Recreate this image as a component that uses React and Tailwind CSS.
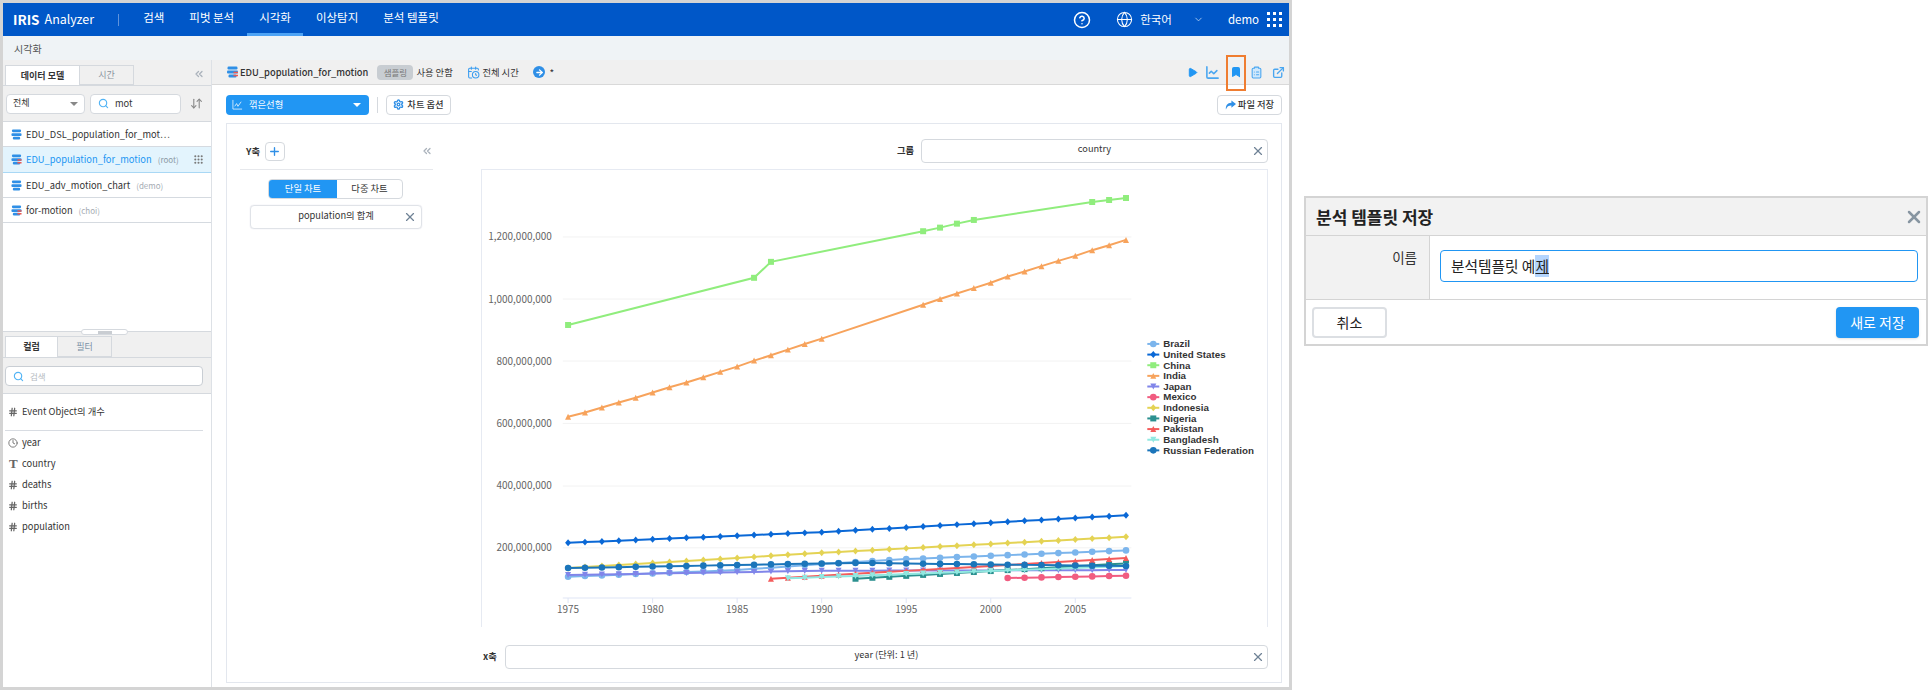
import { Search, Settings, ChevronsLeft, ChevronDown, X, Plus, Globe, CircleHelp, Play, ChartLine, Bookmark, ClipboardList, ExternalLink, Clock, Hash, CalendarClock, ArrowRight, ArrowDownUp, Grip } from 'lucide-react'

const font = "font-['Noto_Sans_CJK_KR','Noto_Sans',sans-serif]"

const X0 = 567.3
const YEAR = 16.95
const xOf = (yr) => X0 + (yr - 1975) * YEAR

// interpolate between [year, y] keys for the years listed
function line(keys, start = 1975, end = 2008) {
  const pts = []
  for (let yr = start; yr <= end; yr++) {
    let i = 0
    while (i < keys.length - 2 && keys[i + 1][0] < yr) i++
    const [a, ya] = keys[i]
    const [b, yb] = keys[i + 1]
    pts.push([yr, ya + ((yr - a) / (b - a)) * (yb - ya)])
  }
  return pts
}

const china = [[1975, 324.3], [1986, 277], [1987, 261], [1996, 230.3], [1997, 226.7], [1998, 222.7], [1999, 219], [2006, 201], [2007, 199], [2008, 197]]
const indiaA = [416.3, 412, 407, 402, 397.3, 392, 386.7, 382, 376.7, 371.3, 366, 360, 354.7, 349, 343.3, 338].map((y, i) => [1975 + i, y])
const indiaB = [304, 298.3, 292.7, 287.3, 282, 275.7, 270.7, 265.3, 260, 255, 249.3, 244.3, 239].map((y, i) => [1996 + i, y])

const series = [
  { name: 'Brazil', color: '#7cb5ec', mark: 'circle', pts: line([[1975, 576.7], [1985, 570], [1990, 564], [1995, 559], [2000, 555.7], [2008, 550.3]]) },
  { name: 'United States', color: '#0a68d6', mark: 'diamond', pts: line([[1975, 542.7], [1990, 532], [2008, 515]]) },
  { name: 'China', color: '#90ed7d', mark: 'square', pts: china },
  { name: 'India', color: '#f7a35c', mark: 'triangle', pts: [...indiaA, ...indiaB] },
  { name: 'Japan', color: '#8085e9', mark: 'down', pts: line([[1975, 575], [1990, 570.7], [2008, 570]]) },
  { name: 'Mexico', color: '#f15c80', mark: 'circle', pts: line([[2001, 578], [2008, 575.7]], 2001) },
  { name: 'Indonesia', color: '#e4d354', mark: 'diamond', pts: line([[1975, 568], [1990, 552.7], [2008, 536.7]]) },
  { name: 'Nigeria', color: '#2b908f', mark: 'square', pts: line([[1992, 578.7], [2008, 563.3]], 1992) },
  { name: 'Pakistan', color: '#f45b5b', mark: 'triangle', pts: line([[1987, 578.7], [2008, 558]], 1987) },
  { name: 'Bangladesh', color: '#91e8e1', mark: 'down', pts: line([[1988, 578.3], [2008, 566]], 1988) },
  { name: 'Russian Federation', color: '#1b75ba', mark: 'circle', pts: line([[1975, 568], [1992, 562.8], [2008, 566]]) },
]

function Marker({ type, x, y, color, r = 3 }) {
  if (type === 'circle') return <circle cx={x} cy={y} r={r + 0.3} fill={color} />
  if (type === 'square') return <rect x={x - r} y={y - r} width={r * 2} height={r * 2} fill={color} />
  if (type === 'diamond') return <path d={`M${x} ${y - r - 0.5}L${x + r} ${y}L${x} ${y + r + 0.5}L${x - r} ${y}Z`} fill={color} />
  if (type === 'triangle') return <path d={`M${x} ${y - r}L${x + r} ${y + r}L${x - r} ${y + r}Z`} fill={color} />
  return <path d={`M${x - r} ${y - r}L${x + r} ${y - r}L${x} ${y + r}Z`} fill={color} />
}

function Chart() {
  const labels = [[1200, 236], [1000, 298.3], [800, 360.5], [600, 423], [400, 485.7], [200, 547.7]]
  return (
    <svg viewBox="481 169 787 458" className="block w-[787px] h-[458px] border-l border-t border-r border-[#e6eaf2] box-border">
      {labels.map(([v, y]) => (
        <g key={v}>
          <line x1="562" x2="1132" y1={y} y2={y} stroke="#f2f2f2" strokeWidth="1" />
          <text x="551" y={y + 3.5} textAnchor="end" fontSize="10" fill="#666">{v === 1000 ? '1,000,000,000' : v === 1200 ? '1,200,000,000' : `${v},000,000`}</text>
        </g>
      ))}
      <line x1="562" x2="1132" y1="598" y2="598" stroke="#dfe5f5" strokeWidth="1" />
      {[1975, 1980, 1985, 1990, 1995, 2000, 2005].map((yr) => (
        <g key={yr}>
          <line x1={xOf(yr)} x2={xOf(yr)} y1="598" y2="603" stroke="#dfe5f5" />
          <text x={xOf(yr)} y="613" textAnchor="middle" fontSize="10" fill="#666">{yr}</text>
        </g>
      ))}
      {series.map((s) => (
        <g key={s.name}>
          <polyline fill="none" stroke={s.color} strokeWidth="2" points={s.pts.map(([yr, y]) => `${xOf(yr)},${y}`).join(' ')} />
          {s.pts.map(([yr, y]) => <Marker key={yr} type={s.mark} x={xOf(yr)} y={y} color={s.color} />)}
        </g>
      ))}
      {series.map((s, i) => {
        const y = 343.3 + i * 10.67
        return (
          <g key={s.name}>
            <line x1="1148" x2="1160" y1={y} y2={y} stroke={s.color} strokeWidth="2" />
            <Marker type={s.mark} x={1154} y={y} color={s.color} />
            <text x="1164" y={y + 3.3} fontSize="9.8" fontWeight="700" fill="#333" fontFamily="'Liberation Sans', sans-serif">{s.name}</text>
          </g>
        )
      })}
    </svg>
  )
}

function DbIcon({ red = false, className = 'w-[11px] h-[11px]' }) {
  return (
    <svg viewBox="0 0 12 12" className={`shrink-0 ${className}`}>
      <rect x="1" y="0.5" width="10" height="3" rx="1.2" fill="#2f8fe6" />
      <rect x="0.5" y="4.5" width="11" height="3" rx="1" fill="#2f8fe6" />
      <rect x="2" y="8.5" width="8" height="3" rx="1.2" fill="#2f8fe6" />
      {red && <path d="M7 6.5h4.5M7 9.5h4.5" stroke="#ee5a52" strokeWidth="1.6" />}
    </svg>
  )
}

function ModelRow({ name, owner, active, red }) {
  return (
    <div className={`flex items-center pl-[8px] pr-[6px] border-b text-[9.3px] shrink-0 ${active ? 'h-[26px] bg-[#e3f4fd] border-[#a9d8f5] text-[#2196f3]' : 'h-[25px] border-[#d5dae0] text-[#333]'}`}>
      <DbIcon red={red} />
      <span className="ml-[4px] whitespace-nowrap mt-[1px]">{name}</span>
      {owner && <span className={`ml-[6px] mt-[1px] text-[8px] ${active ? 'text-[#8b9aa6]' : 'text-[#a5acb3]'}`}>{owner}</span>}
      {active && <Grip size={11} className="ml-auto mr-[1px] text-[#777]" strokeWidth={2.5} />}
    </div>
  )
}

function ColumnRow({ icon, children, h = 'h-[21px]' }) {
  return (
    <div className={`flex items-center ${h} text-[9.3px] text-[#333]`}>
      <span className="w-[19px] pl-[5px] text-[#666] flex">{icon}</span>
      {children}
    </div>
  )
}

const hash = <Hash size={10} strokeWidth={3} />

function Sidebar() {
  return (
    <aside className="w-[209px] shrink-0 border-r border-[#dde1e6] flex flex-col">
      <div className="h-[271px] flex flex-col shrink-0">
        <div className="h-[25px] bg-[#f0f0f0] flex items-end pl-[2px] pr-[6px] shrink-0">
          <div className="w-[75px] h-[20px] bg-white border border-b-0 border-[#d5d9de] flex items-center justify-center text-[9px] font-bold text-[#333]">데이터 모델</div>
          <div className="w-[54px] h-[20px] border border-l-0 border-[#d5d9de] flex items-center justify-center text-[9px] text-[#8a949e]">시간</div>
          <ChevronsLeft size={12} strokeWidth={2.5} className="ml-auto mb-[5px] text-[#aab2bb]" />
        </div>
        <div className="h-[37px] bg-[#f0f0f0] border-t border-[#d5d9de] border-b flex items-center pl-[3px] gap-[5px] shrink-0">
          <div className="w-[79px] h-[20px] bg-white border border-[#d5d9de] rounded-sm flex items-center px-[6px] pb-[2px] text-[9px] text-[#333]">
            전체
            <span className="ml-auto mt-[2px] w-0 h-0 border-x-[4px] border-x-transparent border-t-[4px] border-t-[#888]" />
          </div>
          <div className="w-[91px] h-[20px] bg-white border border-[#d5d9de] rounded-sm flex items-center px-[7px] text-[9.3px] text-[#333]">
            <Search size={11} strokeWidth={2.5} className="text-[#53b4f5] mr-[6px]" />
            mot
          </div>
          <ArrowDownUp size={13} className="ml-[4px] text-[#888]" />
        </div>
        <ModelRow name="EDU_DSL_population_for_mot⋯" />
        <ModelRow name="EDU_population_for_motion" owner="(root)" active red />
        <ModelRow name="EDU_adv_motion_chart" owner="(demo)" />
        <ModelRow name="for-motion" owner="(choi)" red />
      </div>
      <div className="relative h-[27px] bg-[#f0f0f0] border-t border-[#d5d9de] border-b flex items-end pl-[2px] shrink-0">
        <div className="absolute left-[78px] -top-[3px] w-[47px] h-[6px] bg-white border border-[#d5d9de] rounded-full flex items-center justify-center">
          <span className="w-[14px] h-[3px] bg-[#c9cdd2]" />
        </div>
        <div className="w-[53px] h-[21px] bg-white border border-b-0 border-[#d5d9de] flex items-center justify-center text-[9px] font-bold text-[#333]">컬럼</div>
        <div className="w-[54px] h-[21px] border border-l-0 border-[#d5d9de] flex items-center justify-center text-[9px] text-[#7b93a8]">필터</div>
      </div>
      <div className="h-[36px] bg-[#f0f0f0] border-b border-[#d5d9de] flex items-start pt-[8px] pl-[2px] shrink-0">
        <div className="w-[198px] h-[20px] bg-white border border-[#c9ced4] rounded-sm flex items-center px-[7px] text-[8.5px] text-[#b5bbc1]">
          <Search size={11} strokeWidth={2.5} className="text-[#53b4f5] mr-[6px]" />
          검색
        </div>
      </div>
      <div className="pt-[6px]">
        <ColumnRow icon={hash} h="h-[24px]">Event Object의 개수</ColumnRow>
        <div className="h-px bg-[#d8dce2] mx-[2px] mt-[6px] mb-[1px] w-[198px]" />
        <ColumnRow icon={<Clock size={10} strokeWidth={2} />}>year</ColumnRow>
        <ColumnRow icon={<span className="font-['Liberation_Serif',serif] font-bold text-[13px] leading-none pl-[1px]">T</span>}>country</ColumnRow>
        <ColumnRow icon={hash}>deaths</ColumnRow>
        <ColumnRow icon={hash}>births</ColumnRow>
        <ColumnRow icon={hash}>population</ColumnRow>
      </div>
    </aside>
  )
}

function Toolbar() {
  return (
    <div className="h-[25px] bg-[#f0f0f0] border-b border-[#d9d9d9] flex items-center pl-[14px] pr-[4px] text-[9.3px] text-[#333]">
      <DbIcon className="w-[13px] h-[12px]" red />
      <span className="ml-[1px] mt-[1px] font-medium">EDU_population_for_motion</span>
      <span className="ml-[9px] w-[36px] h-[15px] bg-[#c8cdd2] rounded-sm flex items-center justify-center text-[8.5px] text-[#777]">샘플링</span>
      <span className="ml-[3px] mt-[1px] w-[36px] whitespace-nowrap">사용 안함</span>
      <CalendarClock size={13} className="ml-[15px] text-[#3b9df0]" />
      <span className="ml-[2px] mt-[1px] w-[36px] whitespace-nowrap">전체 시간</span>
      <span className="ml-[15px] w-[12px] h-[12px] bg-[#2f8fe6] rounded-full flex items-center justify-center">
        <ArrowRight size={9} strokeWidth={3.5} className="text-white" />
      </span>
      <span className="ml-[4px] text-[10px]">*</span>
      <div className="ml-auto flex items-center relative text-[#4aa6f0]">
        <Play size={11} fill="#2196f3" className="text-[#2196f3]" />
        <ChartLine size={15} strokeWidth={2.5} className="ml-[7px]" />
        <Bookmark size={12} fill="#2196f3" className="ml-[10px] text-[#2196f3]" />
        <ClipboardList size={13} fill="#cfe8fc" className="ml-[8px]" />
        <ExternalLink size={13} strokeWidth={2.5} className="ml-[9px]" />
        <span className="absolute left-[39px] -top-[10px] w-[20px] h-[36px] border-2 border-[#ef7d31]" />
      </div>
    </div>
  )
}

function ActionRow() {
  return (
    <div className="h-[38px] flex items-center pl-[14px] pr-[7px] pt-[1px] text-[9.3px]">
      <div className="w-[143px] h-[20px] bg-[#2196f3] rounded-sm flex items-center px-[6px] text-white">
        <svg viewBox="0 0 12 12" className="w-[11px] h-[11px] mr-[6px]" fill="none" stroke="#fff" strokeWidth="0.8"><path d="M1 1v10h10M3 8l2-3 1.5 3L10 3" /></svg>
        꺾은선형
        <span className="ml-auto mr-[2px] w-0 h-0 border-x-[4px] border-x-transparent border-t-[4px] border-t-white" />
      </div>
      <span className="ml-[8px] w-px h-[16px] bg-[#d5d9de]" />
      <div className="ml-[8px] w-[65px] h-[20px] border border-[#d5d9de] rounded-sm flex items-center justify-center text-[#333] font-medium">
        <Settings size={11} strokeWidth={3} className="text-[#2f8fe6] mr-[3px]" />
        차트 옵션
      </div>
      <div className="ml-auto w-[65px] h-[20px] border border-[#d5d9de] rounded-sm flex items-center justify-center text-[#333] font-medium">
        <svg viewBox="0 0 12 10" className="w-[11px] h-[10px] mr-[2px]"><path d="M7 0l5 4-5 4V5.5C4 5.5 2 6.5 1 10c-.5-4 1.5-7.5 6-7.5z" fill="#2f8fe6" /></svg>
        파일 저장
      </div>
    </div>
  )
}

function YAxisPanel() {
  return (
    <div className="w-[254px] shrink-0 pl-[13px] pt-[18px]">
      <div className="w-[193px] h-[28px] border-b border-[#e6e8ec] flex items-start pl-[6px]">
        <span className="text-[9.3px] font-bold text-[#333] mt-[3px]">Y축</span>
        <span className="ml-[5px] w-[20px] h-[19px] border border-[#d5d9de] rounded-sm flex items-center justify-center">
          <Plus size={13} strokeWidth={2.5} className="text-[#2f8fe6]" />
        </span>
        <ChevronsLeft size={12} strokeWidth={2.5} className="ml-auto mt-[3px] text-[#aab2bb]" />
      </div>
      <div className="mt-[9px] ml-[28px] w-[135px] h-[20px] flex text-[9.3px] rounded-sm overflow-hidden border border-[#d5d9de]">
        <div className="w-[68px] bg-[#2196f3] text-white flex items-center justify-center">단일 차트</div>
        <div className="flex-1 text-[#333] flex items-center justify-center">다중 차트</div>
      </div>
      <div className="mt-[6px] ml-[10px] w-[172px] h-[24px] border border-[#e0e3e8] rounded-sm flex items-center justify-center relative pb-[2px] text-[9.3px] text-[#333] shadow-[0_0_1px_#ccd]">
        population의 합계
        <X size={14} className="absolute right-[4px] top-[4px] text-[#6f8296]" />
      </div>
    </div>
  )
}

function ValueBox({ label, children }) {
  return (
    <div className="flex items-center">
      {label}
      <div className="h-[24px] border border-[#d5d9de] rounded-sm flex-1 flex items-center justify-center relative pb-[4px] text-[9.2px] text-[#333]">
        {children}
        <X size={14} className="absolute right-[2px] top-[4px] text-[#6f8296]" />
      </div>
    </div>
  )
}

function Card() {
  return (
    <div className="ml-[14px] mr-[7px] h-[560px] border border-[#e3e7ee] flex">
      <YAxisPanel />
      <div className="w-[787px] pt-[15px]">
        <ValueBox label={<span className="w-[440px] pr-[7px] text-right text-[9.3px] font-bold text-[#333]">그룹</span>}>country</ValueBox>
        <div className="mt-[6px]"><Chart /></div>
        <div className="mt-[18px]">
          <ValueBox label={<span className="w-[24px] pl-[2px] text-[9.3px] font-bold text-[#333]">x축</span>}>year (단위: 1 년)</ValueBox>
        </div>
      </div>
    </div>
  )
}

function TemplateModal() {
  return (
    <div className="mt-[196px] ml-[12px] w-[624px] h-[150px] border-2 border-[#d4d4d4] flex flex-col">
      <div className="h-[38px] bg-[#f2f2f2] border-b border-[#d4d4d4] flex items-center pl-[10px] pr-[2px]">
        <span className="text-[17px] font-bold text-[#222]">분석 템플릿 저장</span>
        <X size={20} strokeWidth={3} className="ml-auto text-[#8795a1]" />
      </div>
      <div className="h-[64px] border-b border-[#d4d4d4] flex">
        <div className="w-[124px] bg-[#f2f2f2] border-r border-[#d4d4d4] text-right pr-[12px] pt-[11px] text-[13.5px] text-[#333]">이름</div>
        <div className="flex-1 pl-[10px] pr-[8px] pt-[14px]">
          <div className="h-[32px] border border-[#2196f3] rounded-[4px] flex items-center pl-[10px] text-[14.7px] text-[#222]">
            분석템플릿 예<span className="bg-[#b4d5fe] underline">제</span>
          </div>
        </div>
      </div>
      <div className="flex-1 flex items-center justify-between pl-[6px] pr-[7px]">
        <button className="w-[75px] h-[31px] border-2 border-[#dcdfe3] rounded-[4px] text-[14px] text-[#222]">취소</button>
        <button className="w-[83px] h-[31px] bg-[#2196f3] rounded-[4px] text-[14px] text-white shadow-sm">새로 저장</button>
      </div>
    </div>
  )
}

export default function App() {
  const nav = ['검색', '피벗 분석', '시각화', '이상탐지', '분석 템플릿']
  return (
    <div className={`w-[1929px] h-[691px] bg-white flex items-start overflow-hidden ${font}`}>
      <div className="w-[1292px] h-[690px] border-[3px] border-[#d4d4d4] flex flex-col shrink-0 box-border">
        <header className="h-[33px] bg-[#0057c8] flex items-center text-white shrink-0">
          <span className="ml-[10px] text-[13.5px] font-bold">IRIS</span>
          <span className="ml-[5px] text-[12.5px]">Analyzer</span>
          <span className="ml-[24px] w-px h-[12px] bg-[#5f93dc]" />
          <nav className="ml-[12px] flex h-full">
            {nav.map((n) => (
              <div key={n} className={`px-[12px] mr-[1px] flex items-center text-[11.5px] border-b-[3px] ${n === '시각화' ? 'border-[#4da3f5]' : 'border-transparent'}`}>{n}</div>
            ))}
          </nav>
          <div className="ml-auto flex items-center pr-[7px]">
            <CircleHelp size={18} />
            <Globe size={17} className="ml-[25px]" strokeWidth={1.5} />
            <span className="ml-[7px] text-[11.5px]">한국어</span>
            <ChevronDown size={11} className="ml-[21px] text-[#a9c8ef]" />
            <span className="ml-[24px] text-[11.5px]">demo</span>
            <div className="ml-[8px] grid grid-cols-3 gap-[3px]">
              {Array.from({ length: 9 }).map((_, i) => <span key={i} className="w-[3px] h-[3px] bg-white" />)}
            </div>
          </div>
        </header>
        <div className="h-[24px] bg-[#eff3f6] flex items-center pl-[11px] text-[10px] text-[#555] shrink-0">시각화</div>
        <div className="flex-1 flex min-h-0">
          <Sidebar />
          <main className="flex-1 flex flex-col min-w-0">
            <Toolbar />
            <ActionRow />
            <Card />
          </main>
        </div>
      </div>
      <TemplateModal />
    </div>
  )
}
